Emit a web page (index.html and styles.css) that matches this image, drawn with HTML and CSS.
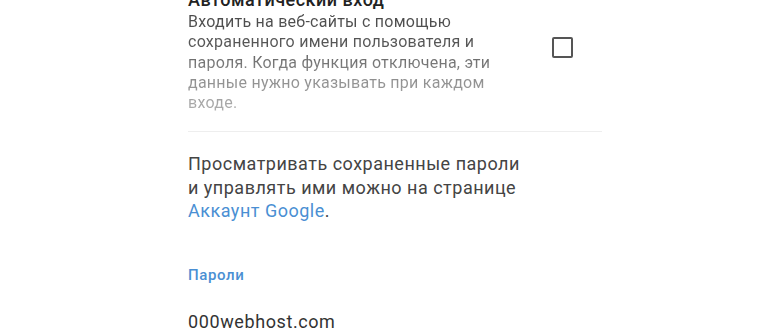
FILE: index.html
```html
<!DOCTYPE html>
<html>
<head>
  <link rel="stylesheet" href="styles.css">
</head>
<body>
  <div class="page">

    <!-- auto sign-in row -->
    <div class="setting-row">
      <div class="setting-text">
        <div class="setting-title">Автоматический вход</div>
        <div class="setting-desc">Входить на веб-сайты с помощью сохраненного имени пользователя и пароля. Когда функция отключена, эти данные нужно указывать при каждом входе.</div>
      </div>
      <div class="checkbox"></div>
    </div>

    <div class="divider"></div>

    <p class="info">Просматривать сохраненные пароли и управлять ими можно на странице <a class="link">Аккаунт Google</a>.</p>

    <div class="section-title">Пароли</div>

    <div class="site">000webhost.com</div>
  </div>
</body>
</html>
```

FILE: styles.css
```css
body {
  margin: 0;
  background-color: white;
  font-family: Roboto, "Noto Sans", sans-serif;
  overflow: hidden;
}

.page {
  width: 414px;
  margin-left: 188px;
  margin-top: -12px;
}

.setting-row {
  display: flex;
  align-items: flex-start;
  justify-content: space-between;
}

.setting-text {
  width: 314px;
}

.setting-title {
  font-size: 18px;
  font-weight: 500;
  line-height: 24px;
  letter-spacing: 0.5px;
  color: #222;
}

.setting-desc {
  font-size: 16px;
  line-height: 20.3px;
  letter-spacing: 0.25px;
  /* the lower lines fade out */
  background: linear-gradient(to bottom, #4a4a4a 0%, #585858 35%, #888 60%, #b0b0b0 100%);
  -webkit-background-clip: text;
  background-clip: text;
  color: transparent;
}

.checkbox {
  width: 17px;
  height: 17px;
  border: 2.5px solid #555;
  border-radius: 2px;
  margin-top: 49px;
  margin-right: 29px;
}

.divider {
  height: 1px;
  background-color: #eeeeee;
  margin-top: 18px;
}

.info {
  margin: 20px 0 0 0;
  font-size: 18px;
  line-height: 23.5px;
  letter-spacing: 0.5px;
  color: #444;
  width: 345px;
}

.link {
  color: #4a8fd3;
}

.section-title {
  margin-top: 43px;
  font-size: 15px;
  font-weight: 500;
  letter-spacing: 0.6px;
  color: #4a8fd3;
}

.site {
  margin-top: 27px;
  font-size: 18px;
  letter-spacing: 0.6px;
  color: #333;
}
```
